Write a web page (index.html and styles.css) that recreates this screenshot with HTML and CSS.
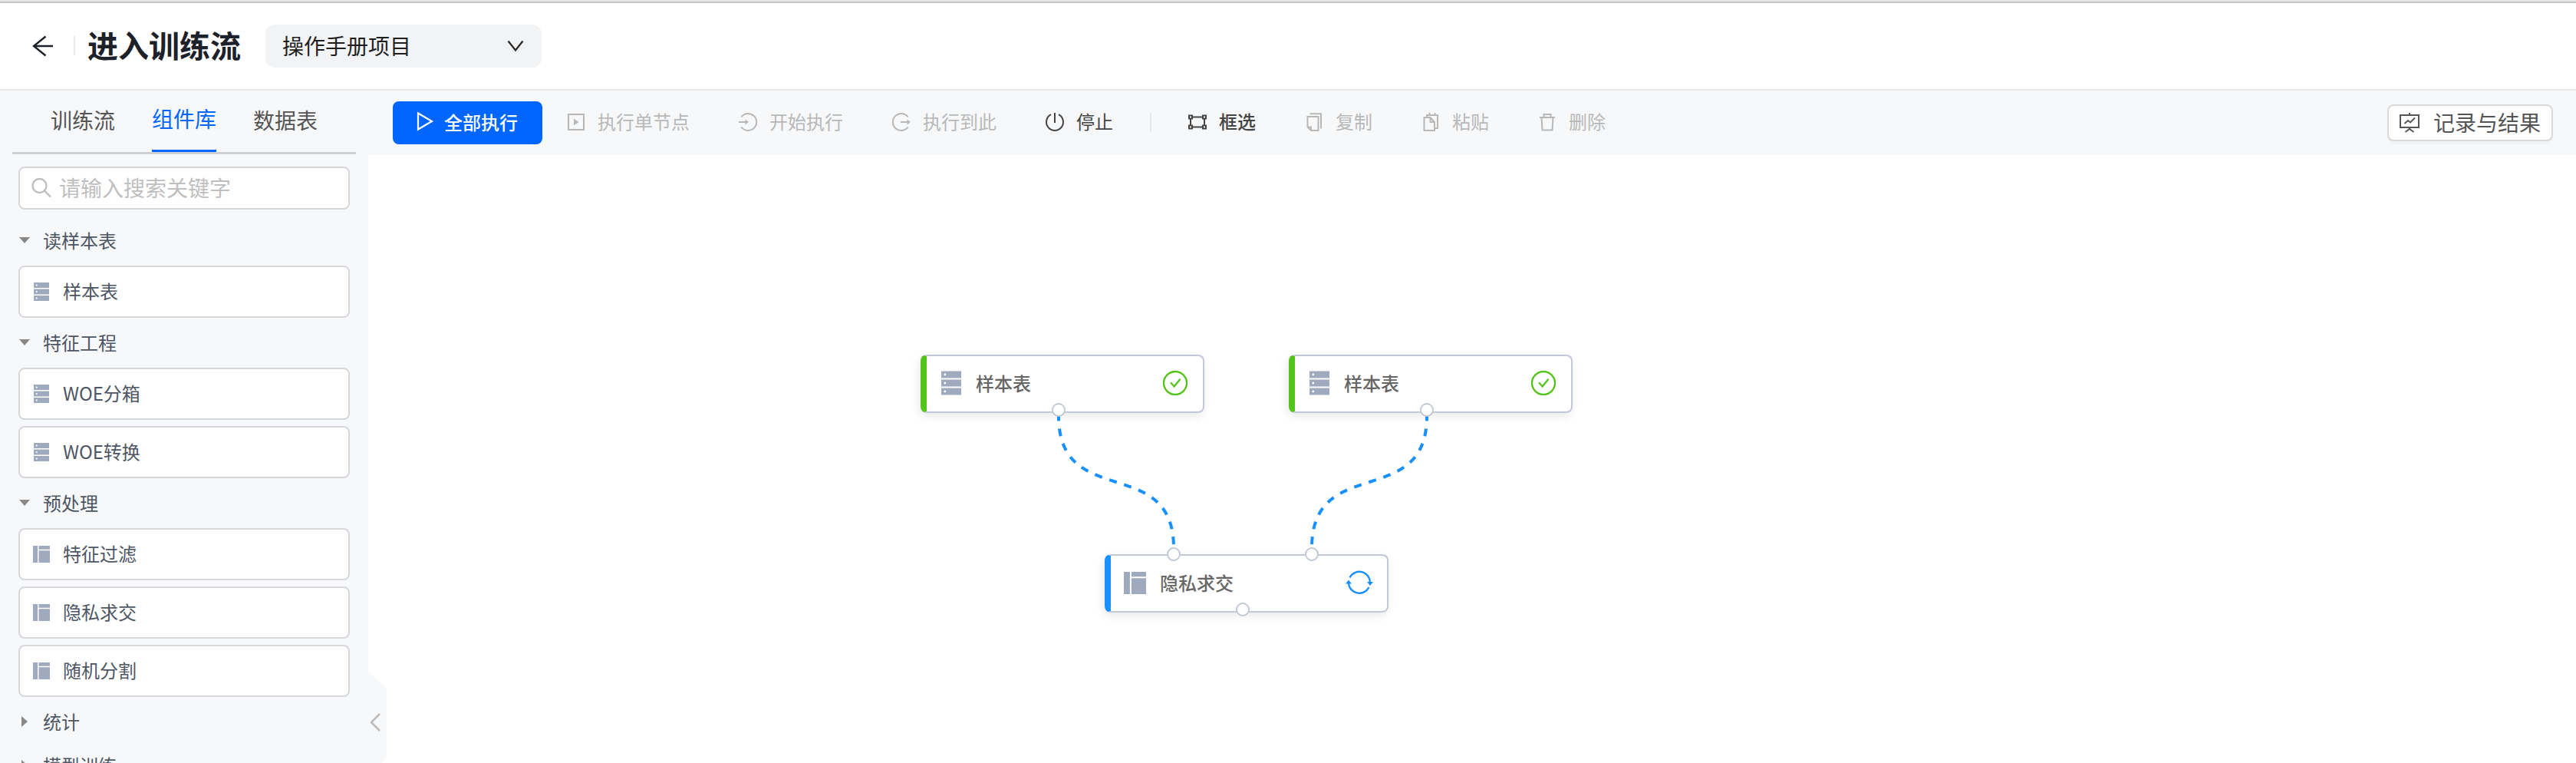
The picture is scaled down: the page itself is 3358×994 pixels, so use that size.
FILE: index.html
```
<!DOCTYPE html>
<html lang="zh-CN">
<head>
<meta charset="utf-8">
<title>进入训练流</title>
<link rel="stylesheet" href="styles.css">
</head>
<body>
<svg class="defs" width="0" height="0" aria-hidden="true">
  <symbol id="rows" viewBox="0 0 20 24">
    <path fill="#a0aabf" d="M0 0h20v7H0zM0 8.500h20v7H0zM0 17h20v7H0z"/>
    <circle cx="3.700" cy="3.500" r="1.100" fill="#fff"/><circle cx="3.700" cy="12" r="1.100" fill="#fff"/><circle cx="3.700" cy="20.500" r="1.100" fill="#fff"/>
  </symbol>
  <symbol id="panel" viewBox="0 0 22 22">
    <path fill="#a0aabf" d="M0 0h6v22H0zM7.500 0H22v4.700H7.500zM7.500 6.200H22V22H7.500z"/>
  </symbol>
  <symbol id="check" viewBox="0 0 32 32">
    <circle cx="16" cy="16" r="15" fill="none" stroke="#52c41a" stroke-width="2.400"/>
    <path d="M10 15.200l4.700 5.300 7.800-9.800" fill="none" stroke="#52c41a" stroke-width="2.200"/>
  </symbol>
</svg>
<header class="header">
  <svg class="back" width="28" height="28" viewBox="0 0 28 28"><path d="M17.500 1.500 2 14l15.500 12.500M2 14h25" /></svg>
  <span class="bar"></span>
  <h1 class="title">进入训练流</h1>
  <div class="select"><span>操作手册项目</span><svg width="22" height="16" viewBox="0 0 22 16"><path d="M1.500 1.500 11 13.500 20.500 1.500"/></svg></div>
</header>
<main class="main">
  <aside class="side">
    <nav class="tabs"><span class="tab">训练流</span><span class="tab active">组件库</span><span class="tab">数据表</span></nav>
    <div class="search"><svg width="27" height="27" viewBox="0 0 27 27"><circle cx="10.500" cy="11" r="9"/><path d="M17 17.500 25 25.500"/></svg><span>请输入搜索关键字</span></div>
    <div class="tree">
      <div class="group"><i class="tri down"></i>读样本表</div>
      <div class="item"><svg class="rows"><use href="#rows"/></svg>样本表</div>
      <div class="group"><i class="tri down"></i>特征工程</div>
      <div class="item"><svg class="rows"><use href="#rows"/></svg>WOE分箱</div>
      <div class="item"><svg class="rows"><use href="#rows"/></svg>WOE转换</div>
      <div class="group"><i class="tri down"></i>预处理</div>
      <div class="item"><svg class="panel"><use href="#panel"/></svg>特征过滤</div>
      <div class="item"><svg class="panel"><use href="#panel"/></svg>隐私求交</div>
      <div class="item"><svg class="panel"><use href="#panel"/></svg>随机分割</div>
      <div class="group"><i class="tri right"></i>统计</div>
      <div class="group"><i class="tri right"></i>模型训练</div>
    </div>
    <svg class="handle" width="24" height="118" viewBox="0 0 24 118"><path class="handle-bg" d="M0 0V-2L0 118H16Q24 112 24 104V24Q24 20 20 16L0 -2Z"/><path class="handle-arrow" d="M15 54 4 65l11 11"/></svg>
  </aside>
  <section class="work">
    <div class="toolbar">
      <button class="run"><svg width="22" height="26" viewBox="0 0 22 26"><path d="M2 2.500 20 13 2 23.500z"/></svg>全部执行</button>
      <div class="tool t1 off"><svg viewBox="0 0 24 24"><path d="M2 2h20v20H2z"/><path class="solid" d="M9 7.500 15.500 12 9 16.500z"/></svg>执行单节点</div>
      <div class="tool t2 off"><svg viewBox="0 0 24 24"><path d="M3.300 5.500A11 11 0 1 1 3.300 18.500M0 12h12"/><path class="solid" d="M8.500 8.500 13 12l-4.500 3.500z"/></svg>开始执行</div>
      <div class="tool t3 off"><svg viewBox="0 0 24 24"><path d="M20.700 5.500a11 11 0 1 0 0 13M11 12h11"/><path class="solid" d="M19.500 8.500 24 12l-4.500 3.500z"/></svg>执行到此</div>
      <div class="tool t4"><svg viewBox="0 0 24 24"><path d="M7 2.200a11 11 0 1 0 10 0M12 0v13"/></svg>停止</div>
      <span class="bar split"></span>
      <div class="tool t5 strong"><svg viewBox="0 0 24 24"><path d="M1 3.500h4v4H1zM19 3.500h4v4h-4zM1 16.500h4v4H1zM19 16.500h4v4h-4zM5 5.500h14M5 18.500h14M3 7.500v9M21 7.500v9"/></svg>框选</div>
      <div class="tool off"><svg viewBox="0 0 24 24"><path d="M6.500 1.200H21V20.500M3.500 5h14v18H8L3.500 18.500zM3.500 18.500H8V23"/></svg>复制</div>
      <div class="tool off"><svg viewBox="0 0 24 24"><path d="M3.500 6h8l5.500 6v11H3.500zM11.500 6v6H17M7 6V3h14v17h-4M10.500 0v4M17.500 0v4"/></svg>粘贴</div>
      <div class="tool off"><svg viewBox="0 0 24 24"><path d="M2 6h20M4.500 6l1 16.500h13l1-16.500M7.500 6V2h9v4"/></svg>删除</div>
      <button class="result"><svg width="28" height="28" viewBox="0 0 28 28"><path d="M2 4h24v16H2zM14 1v3M14 20v2M8.500 26l5.500-4 5.500 4M7.500 15l4.500-4 3 2.500 6-6"/></svg>记录与结果</button>
    </div>
    <div class="canvas">
      <div class="node n1 ok"><svg class="big-rows"><use href="#rows"/></svg><span>样本表</span><svg class="state"><use href="#check"/></svg></div>
      <div class="node n2 ok"><svg class="big-rows"><use href="#rows"/></svg><span>样本表</span><svg class="state"><use href="#check"/></svg></div>
      <div class="node n3 busy"><svg class="big-panel"><use href="#panel"/></svg><span>隐私求交</span><svg class="state wide" viewBox="0 0 36 32"><path d="M5.500 9.500A14 14 0 0 1 32 16M30.500 22A14 14 0 0 1 4 16.500" fill="none" stroke="#1890ff" stroke-width="2.400"/><path d="M28 15h8l-4 5zM0 17.500h8l-4-5z" fill="#1890ff"/></svg></div>
      <svg class="edges" width="2878" height="792" viewBox="480 202 2878 792">
        <path class="edge" d="M1380 538.300V542C1380 666 1530 590 1530 714V718"/>
        <path class="edge" d="M1860 538.300V542C1860 666 1710 590 1710 714V718"/>
        <circle cx="1380" cy="534" r="8"/><circle cx="1860" cy="534" r="8"/>
        <circle cx="1530" cy="722" r="8"/><circle cx="1710" cy="722" r="8"/><circle cx="1620" cy="794" r="8"/>
      </svg>
    </div>
  </section>
</main>
</body>
</html>
```
FILE: styles.css
```
* { box-sizing: border-box; }
body { margin: 0; width: 3358px; height: 994px; overflow: hidden; background: #fff; color: #4e5664; font: 24px/1.5 "Noto Sans CJK SC", sans-serif; display: flex; flex-direction: column; }
svg { display: block; flex: none; fill: none; overflow: visible; }
.defs { display: none; }
button { font: inherit; margin: 0; border: 0; }
.header { flex: none; height: 118px; border-top: 2px solid #e6e6e6; border-bottom: 2px solid #e8e9eb; box-shadow: inset 0 2px #c6c6c6; display: flex; align-items: center; padding: 2px 0 0 42px; }
.back { stroke: #1d2129; stroke-width: 2.400; }
.bar { width: 2px; height: 25px; background: #e8e9eb; }
.header .bar { margin: 0 0 2px 26px; }
.title { margin: 0 0 0 16px; padding-bottom: 5px; width: 201px; font-size: 40px; line-height: 56px; font-weight: 700; color: #1d2129; white-space: nowrap; }
.select { margin-left: 31px; width: 360px; height: 56px; border-radius: 12px; background: #f2f3f5; padding: 0 23px 3px 22px; display: flex; align-items: center; justify-content: space-between; font-size: 28px; color: #1f1f1f; }
.select svg { stroke: #262626; stroke-width: 2.200; margin-top: 3px; }
.main { flex: 1; min-height: 0; display: flex; }
.side { position: relative; flex: none; width: 480px; background: #f7f8fa; }
.tabs { margin: 0 16px; height: 83px; border-bottom: 3px solid #d0d1d3; display: flex; padding-left: 50px; gap: 48px; font-size: 28px; color: #555; }
.tab { width: 84px; height: 80px; line-height: 76px; white-space: nowrap; }
.tab.active { color: #06f; border-bottom: 3px solid #06f; line-height: 73px; }
.search { margin: 16px 24px; height: 56px; border: 2px solid #d6d7da; border-radius: 8px; background: #fff; display: flex; align-items: center; gap: 9px; padding: 0 0 3px 15px; font-size: 28px; color: #bfbfbf; }
.search svg { stroke: #bfbfbf; stroke-width: 2.400; margin-top: 2px; }
.tree { padding: 0 24px; }
.group { height: 49px; margin-bottom: 8px; padding-bottom: 1px; display: flex; align-items: center; }
.tri { width: 32px; height: 14px; }
.tri::before { content: ""; display: block; border: 7px solid transparent; width: 0; }
.down::before { border-top: 8px solid #888; border-bottom: 0; margin: 3px 0 0 1px; }
.right::before { border-left: 8px solid #888; border-right: 0; margin-left: 4px; }
.item { height: 68px; margin-bottom: 8px; border: 2px solid #d6d7da; border-radius: 8px; background: #fff; display: flex; align-items: center; padding: 0 0 2px 17px; }
.rows { width: 20px; height: 24px; margin: 2px 18px 0 1px; }
.panel { width: 22px; height: 22px; margin: 2px 17px 0 0; }
.handle { position: absolute; left: 480px; top: 760px; z-index: 2; margin-top: -2px; }
.handle-bg { fill: #f7f8fa; }
.handle-arrow { stroke: #bbb; stroke-width: 2.500; transform: translateY(-1px); }
.side .handle { top: 761px; }
.work { flex: 1; min-width: 0; display: flex; flex-direction: column; }
.toolbar { flex: none; height: 84px; background: #f7f8fa; display: flex; align-items: center; padding: 0 30px 0 32px; }
.run { width: 195px; height: 56px; border-radius: 8px; background: #06f; color: #fff; display: flex; align-items: center; gap: 14px; padding: 0 0 2px 31px; font-weight: 500; white-space: nowrap; }
.run svg { stroke: #fff; stroke-width: 2.200; margin-bottom: 3px; }
.tool { display: flex; align-items: center; gap: 16px; margin-left: 64px; padding-bottom: 4px; color: #444; white-space: nowrap; }
.tool svg { width: 24px; height: 24px; margin-top: 2px; stroke: currentColor; stroke-width: 2; }
.tool .solid { fill: currentColor; stroke: none; }
.tool.off { color: #b8b8b8; }
.strong { font-weight: 500; }
.tool.t1 { margin-left: 32px; }
.split { margin: 0 0 2px 48px; }
.tool.t5 { margin-left: 48px; }
.result { margin-left: auto; width: 216px; height: 48px; border: 2px solid #d9d9d9; border-radius: 8px; background: #fff; box-shadow: 0 4px 0 rgba(0,0,0,.02); display: flex; align-items: center; gap: 17px; padding: 0 0 3px 13px; font-size: 28px; line-height: 1; color: #555; white-space: nowrap; }
.result svg { stroke: #555; stroke-width: 2; margin-top: 3px; }
.canvas { position: relative; flex: 1; background: #fff; }
.edges { position: absolute; left: 0; top: 0; }
.edge { stroke: #1890ff; stroke-width: 4; stroke-dasharray: 10 10; }
.edges circle { fill: #fff; stroke: #c2c8d5; stroke-width: 2; }
.node { position: absolute; width: 370px; height: 76px; padding-bottom: 2px; border: 2px solid #c2c8d5; border-left-width: 8px; border-radius: 8px; background: #fff; box-shadow: -2px 4px 12px rgba(0,0,0,.09); display: flex; align-items: center; color: #666; font-weight: 500; }
.node span { white-space: nowrap; }
.n1 { left: 720px; top: 260px; }
.n2 { left: 1200px; top: 260px; }
.n3 { left: 960px; top: 520px; }
.ok { border-left-color: #52c41a; }
.busy { border-left-color: #1890ff; }
.big-rows { width: 26px; height: 32px; margin: 0 19px; }
.big-panel { width: 29px; height: 29px; margin: 0 18px 0 17px; }
.state { width: 32px; height: 32px; margin: 0 20px 0 auto; }
.wide { width: 36px; margin-right: 18px; }
```
